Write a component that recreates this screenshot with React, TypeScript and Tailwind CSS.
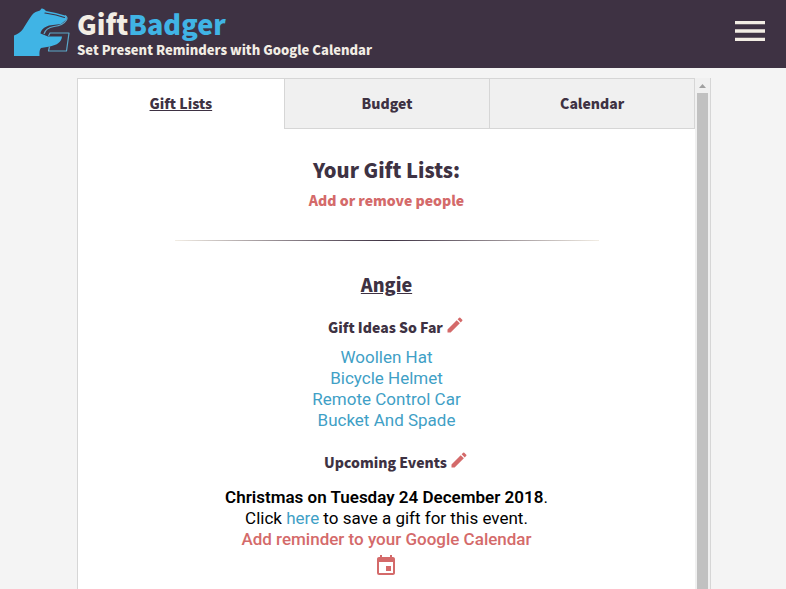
import { MdEdit, MdEvent, MdMenu } from "react-icons/md";

const heading = "font-['Noto_Sans_CJK_SC','Open_Sans',sans-serif] font-black";

const gifts = ["Woollen Hat", "Bicycle Helmet", "Remote Control Car", "Bucket And Spade"];

function BadgerLogo() {
  return (
    <svg viewBox="0 0 56 48" className="h-12 w-14 shrink-0" aria-hidden="true">
      <path
        fill="#40b4e5"
        d="M0 48V27.500C4 26 7 24 9 21C12 16 15 11 18 7C20 4 23 3.500 26 2.500L27.500 0.500Q30 0 32 3L42 5L51 7.500Q54 9 52 12L47 16L35 17.500C30 19 27 22 26.500 25.500L34 28.500H48C47.500 34 43 37 36 38.500L27 40Q25 42 25.500 48Z"
      />
      <path
        fill="none"
        stroke="#3e3243"
        strokeWidth="1.200"
        strokeLinecap="round"
        d="M31 5L42 7L50.500 9.500"
      />
      <path
        fill="none"
        stroke="#5aa7ca"
        strokeWidth="1.200"
        strokeLinejoin="round"
        d="M51 7.500Q54 9 52.500 12C50 16 46 18 40 18.500C34 19.500 31 22 30 26M34.500 28L36 25H55L52.500 43H34.500L35.500 38.500"
      />
    </svg>
  );
}

function EditButton({ label }: { label: string }) {
  return (
    <button type="button" aria-label={label} className="mb-1 text-[#d46a6a]">
      <MdEdit className="size-5" />
    </button>
  );
}

export default function App() {
  return (
    <div className="flex h-screen flex-col overflow-hidden bg-[#f4f4f4] text-[#3e3243]">
      <header className="flex h-[68px] shrink-0 items-start justify-between bg-[#3e3243] pt-2 pr-4 pl-3.5 text-[#f2ede4]">
        <div className="flex gap-[7px]">
          <BadgerLogo />
          <div className={heading}>
            <h1 className="text-[27px] leading-8">
              Gift<span className="text-[#40b4e5]">Badger</span>
            </h1>
            <p className="text-[13px] leading-5">Set Present Reminders with Google Calendar</p>
          </div>
        </div>
        <button type="button" aria-label="Menu" className="mt-[3px]">
          <MdMenu className="size-10" />
        </button>
      </header>

      <div className="flex min-h-0 grow pt-2.5 pr-[75px] pl-[77px]">
        <div className="flex grow overflow-hidden border-x border-[#d6d6d6]">
          <main className="grow overflow-hidden bg-white">
            <nav className={`grid h-[51px] grid-cols-3 border-t border-[#d6d6d6] text-sm ${heading}`}>
              <button type="button" className="pb-0.5 underline">Gift Lists</button>
              <button type="button" className="border-b border-l border-[#d6d6d6] bg-[#f0f0f0] pb-px">Budget</button>
              <button type="button" className="border-x border-b border-[#d6d6d6] bg-[#f0f0f0] pb-px">Calendar</button>
            </nav>

            <div className="flex flex-col items-center pt-[23px] text-center">
              <h2 className={`text-xl leading-9 ${heading}`}>Your Gift Lists:</h2>
              <a href="#people" className={`text-sm leading-6 text-[#d46a6a] ${heading}`}>
                Add or remove people
              </a>
              <hr className="mt-7 h-px w-[424px] max-w-full border-0 bg-linear-to-r from-[#f2ede4] via-[#3e3243] to-[#f2ede4]" />
              <h3 className={`mt-[27px] text-lg leading-8 underline ${heading}`}>Angie</h3>

              <div className="mt-[11px] flex items-center gap-0.5 pl-5">
                <h4 className={`text-sm leading-8 ${heading}`}>Gift Ideas So Far</h4>
                <EditButton label="Edit gift ideas" />
              </div>
              <ul className="mt-1 font-['Roboto',sans-serif] text-[17px] leading-[21px] text-[#3fa0c6]">
                {gifts.map((gift) => (
                  <li key={gift}>{gift}</li>
                ))}
              </ul>

              <div className="mt-[15px] flex items-center gap-0.5 pl-5">
                <h4 className={`text-sm leading-8 ${heading}`}>Upcoming Events</h4>
                <EditButton label="Edit upcoming events" />
              </div>
              <div className="mt-[9px] font-['Roboto',sans-serif] text-[17px] leading-[21px] text-black">
                <p><strong className="font-semibold">Christmas on Tuesday 24 December 2018</strong>.</p>
                <p>Click <a href="#save" className="text-[#3fa0c6]">here</a> to save a gift for this event.</p>
                <a href="#reminder" className="flex flex-col items-center gap-1 font-medium text-[#d46a6a]">
                  Add reminder to your Google Calendar
                  <MdEvent className="size-6" />
                </a>
              </div>
            </div>
          </main>
          <div className="flex w-[15px] shrink-0 flex-col items-center bg-[#f0f0f0]" aria-hidden="true">
            <svg viewBox="0 0 15 15" className="size-[15px] shrink-0">
              <path fill="#a0a0a0" d="M4 10L7.500 6L11 10Z" />
            </svg>
            <div className="w-[11px] grow bg-[#c1c1c1]" />
          </div>
        </div>
      </div>
    </div>
  );
}
